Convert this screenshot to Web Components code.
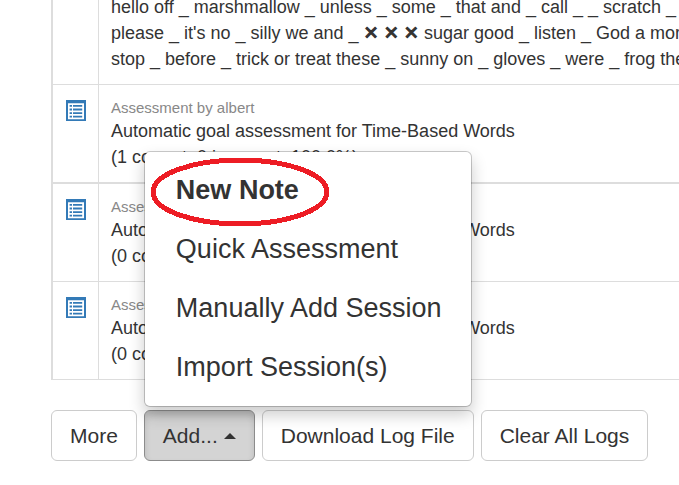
<!DOCTYPE html>
<html lang="en">
<head>
<meta charset="utf-8">
<title>Logs</title>
<style>
    body {
        margin: 0;
        overflow: hidden;
        background: #fff;
        color: #333;
        font-family: "Liberation Sans", Arial, sans-serif;
    }
</style>
</head>
<body>

<log-page>
    <log-table></log-table>
    <button-bar slot="actions">
        <bar-button>More</bar-button>
        <bar-button caret pressed>Add...
            <drop-menu slot="menu">
                <menu-entry strong circled>New Note</menu-entry>
                <menu-entry>Quick Assessment</menu-entry>
                <menu-entry>Manually Add Session</menu-entry>
                <menu-entry>Import Session(s)</menu-entry>
            </drop-menu>
        </bar-button>
        <bar-button>Download Log File</bar-button>
        <bar-button>Clear All Logs</bar-button>
    </button-bar>
</log-page>

<script>
// LOG_ENTRIES {{{1

const LOG_ENTRIES = [
    // the top of this entry is scrolled out of view
    {
        lines: [
            "hello off _ marshmallow _ unless _ some _ that and _ call _ _ scratch _",
            "please _ it's no _ silly we and _ <b>✕</b> <b>✕</b> <b>✕</b> sugar good _ listen _ God a more",
            "stop _ before _ trick or treat these _ sunny on _ gloves _ were _ frog the",
        ],
    },
    {
        icon: true,
        title: 'Assessment by albert',
        lines: ['Automatic goal assessment for Time-Based Words', '(1 correct, 0 incorrect, 100.0%)'],
    },
    {
        icon: true,
        divider: true,
        title: 'Assessment by albert',
        lines: ['Automatic goal assessment for Time-Based Words', '(0 correct, 0 incorrect, 0.0%)'],
    },
    {
        icon: true,
        title: 'Assessment by albert',
        lines: ['Automatic goal assessment for Time-Based Words', '(0 correct, 0 incorrect, 0.0%)'],
    },
];

// class ShadowElement {{{1

// Base class: fills an open shadow root from html() on first attachment
class ShadowElement extends HTMLElement
{
    connectedCallback() {
        if (this.shadowRoot)
            return;
        this.attachShadow({ mode: 'open' }).innerHTML = this.html();
    }
}

// class LogPage {{{1

class LogPage extends ShadowElement
{
    html() {
        return `
            <style>
            :host {
                display: flex;
                flex-flow: column nowrap;
                gap: 30px;
                padding-left: 51px;
                margin-top: -19px;
            }
            </style>
            <slot></slot>
            <slot name="actions"></slot>
        `;
    }
}

// class ListIcon {{{1

class ListIcon extends ShadowElement
{
    html() {
        return `
            <style>
            :host { display: block; color: #337ab7; }
            svg { display: block; }
            </style>
            <svg width="20" height="21" viewBox="0 0 20 21" fill="currentColor" aria-hidden="true">
                <path fill-rule="evenodd" d="M0 0H20V21H0ZM2 3.3V19.3H18V3.3Z"/>
                <path d="M3.6 5h2.4v1.8h-2.4zM3.6 8.6h2.4v1.8h-2.4zM3.6 12.2h2.4v1.8h-2.4zM3.6 15.8h2.4v1.8h-2.4z"/>
                <path d="M7 5h9.2v1.8h-9.2zM7 8.6h9.2v1.8h-9.2zM7 12.2h9.2v1.8h-9.2zM7 15.8h9.2v1.8h-9.2z"/>
            </svg>
        `;
    }
}

// class LogTable {{{1

class LogTable extends ShadowElement
{
    rowHTML(entry) {
        const parts = [];
        parts.push(`<tr class='${entry.divider ? 'divider' : ''}'>`);
        parts.push(`<td class='icon'>${entry.icon ? '<list-icon></list-icon>' : ''}</td>`);
        parts.push("<td>");
        if (entry.title)
            parts.push(`<div class='title'>${entry.title}</div>`);
        for (const line of entry.lines)
            parts.push(`<div class='line'>${line}</div>`);
        parts.push("</td></tr>");
        return parts.join('');
    }

    html() {
        return `
            <style>
            :host { display: block; overflow: hidden; }

            table {
                width: 100%;
                table-layout: fixed;
                border-spacing: 0;
                border-left: 2px solid #ddd;
                border-bottom: 1px solid #ddd;
                font-size: 18px;
                line-height: 26px;
            }

            td {
                padding: 12px 0 12px 12px;
                border-top: 1px solid #ddd;
                border-left: 1px solid #ddd;
                vertical-align: top;
                white-space: nowrap;
                overflow: hidden;
            }

            td.icon {
                width: 32px;
                padding: 15px 0 0 13px;
                border-left: none;
            }

            tr.divider td { border-top-width: 2px; }

            .title {
                font-size: 15px;
                line-height: 21px;
                color: #888;
            }

            .line { height: 26px; }

            b {
                font-family: "DejaVu Sans", sans-serif;
                font-weight: normal;
                -webkit-text-stroke: 1px currentColor;
            }
            </style>
            <table><tbody>${LOG_ENTRIES.map(e => this.rowHTML(e)).join('')}</tbody></table>
        `;
    }
}

// class ButtonBar {{{1

class ButtonBar extends ShadowElement
{
    html() {
        return `
            <style>
            :host { display: flex; gap: 7px; }
            </style>
            <slot></slot>
        `;
    }
}

// class BarButton {{{1

class BarButton extends ShadowElement
{
    html() {
        const caret = this.hasAttribute('caret') ? "<span class='caret'></span>" : '';
        const popup = this.hasAttribute('caret') ? "aria-haspopup='true' aria-expanded='true'" : '';
        return `
            <style>
            :host { display: block; position: relative; }

            button {
                display: flex;
                align-items: center;
                gap: 6px;
                padding: 10px 18px;
                border: 1px solid #ccc;
                border-radius: 6px;
                background: #fff;
                color: #333;
                font: 21px/29px "Liberation Sans", Arial, sans-serif;
                white-space: nowrap;
            }

            :host([pressed]) button {
                background: #d4d4d4;
                border-color: #8c8c8c;
                box-shadow: inset 0 4px 6px rgba(0, 0, 0, .125);
            }

            .caret {
                border: 6px solid transparent;
                border-top: none;
                border-bottom-color: #333;
            }
            </style>
            <button type="button" ${popup}><slot></slot>${caret}</button>
            <slot name="menu"></slot>
        `;
    }
}

// class DropMenu {{{1

class DropMenu extends ShadowElement
{
    html() {
        return `
            <style>
            :host {
                display: block;
                position: absolute;
                z-index: 1;
                left: 0;
                bottom: 100%;
                margin-bottom: 3px;
                padding: 9px 0;
                border: 1px solid rgba(0, 0, 0, .2);
                border-radius: 6px;
                background: #fff;
                background-clip: padding-box;
                box-shadow: 0 8px 16px rgba(0, 0, 0, .2);
            }
            </style>
            <slot></slot>
        `;
    }
}

// class MenuEntry {{{1

class MenuEntry extends ShadowElement
{
    html() {
        const ring = !this.hasAttribute('circled') ? '' : `
            <svg width="180" height="70" viewBox="0 0 180 70" shape-rendering="crispEdges" aria-hidden="true">
                <ellipse cx="90" cy="35" rx="87" ry="32" fill="none" stroke="#ed1c24" stroke-width="5"/>
            </svg>`;
        return `
            <style>
            :host { display: block; position: relative; }

            a {
                display: block;
                padding: 0 29px 0 31px;
                color: #333;
                font-size: 27px;
                line-height: 59px;
                text-decoration: none;
                white-space: nowrap;
            }

            :host([strong]) a { font-weight: bold; }

            svg {
                position: absolute;
                left: 5px;
                top: -4px;
                pointer-events: none;
            }
            </style>
            <a href="#"><slot></slot></a>${ring}
        `;
    }
}

// }}}

customElements.define("log-page", LogPage);
customElements.define("list-icon", ListIcon);
customElements.define("log-table", LogTable);
customElements.define("button-bar", ButtonBar);
customElements.define("bar-button", BarButton);
customElements.define("drop-menu", DropMenu);
customElements.define("menu-entry", MenuEntry);
</script>
</body>
</html>
